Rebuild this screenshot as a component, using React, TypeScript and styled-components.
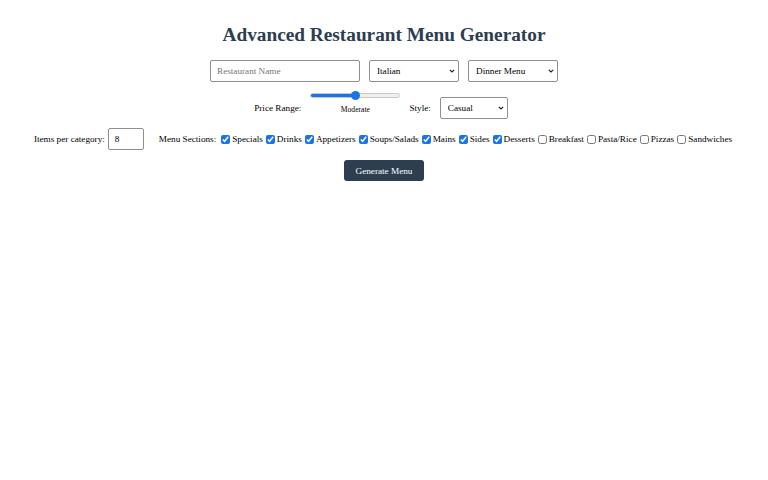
import { useState, type ReactNode } from 'react'
import styled, { createGlobalStyle } from 'styled-components'

const GlobalStyle = createGlobalStyle`
  body {
    margin: 0;
    background: #fff;
    font-family: 'Liberation Serif', 'Times New Roman', serif;
    font-size: 9.2px;
    color: #000;
  }
`

const Page = styled.div`
  display: flex;
  flex-direction: column;
  align-items: center;
  padding-top: 24px;
`

const Title = styled.h1`
  margin: 0 0 14px;
  font-size: 19.3px;
  font-weight: bold;
  color: #2c3e50;
`

const Row = styled.div<{ $gap?: number; $mt?: number; $shift?: number }>`
  display: flex;
  align-items: center;
  justify-content: center;
  gap: ${(p) => p.$gap ?? 9}px;
  margin-top: ${(p) => p.$mt ?? 0}px;
  margin-right: ${(p) => p.$shift ?? 0}px;
`

const TextInput = styled.input<{ $w: number }>`
  box-sizing: border-box;
  width: ${(p) => p.$w}px;
  height: 22px;
  padding: 0 6px;
  font-family: inherit;
  font-size: 9.2px;
  border: 1px solid #8f8f8f;
  border-radius: 2px;
  &::placeholder {
    color: #777;
  }
`

const SelectWrap = styled.div`
  position: relative;
  display: inline-flex;
  svg {
    position: absolute;
    right: 4px;
    top: 50%;
    margin-top: -2px;
    pointer-events: none;
  }
`

const SelectBox = styled.select<{ $w: number }>`
  appearance: none;
  box-sizing: border-box;
  width: ${(p) => p.$w}px;
  height: 22px;
  padding: 0 14px 0 7px;
  font-family: inherit;
  font-size: 9.2px;
  color: #000;
  border: 1px solid #8f8f8f;
  border-radius: 2px;
  background: #fff;
`

function Select({ w, value, children }: { w: number; value: string; children: ReactNode }) {
  return (
    <SelectWrap>
      <SelectBox $w={w} defaultValue={value}>
        {children}
      </SelectBox>
      <svg width="6" height="4" viewBox="0 0 6 4">
        <path d="M0.8 0.8 L3 3 L5.2 0.8" fill="none" stroke="#222" strokeWidth="1.2" />
      </svg>
    </SelectWrap>
  )
}

const Label = styled.label`
  font-size: 9.2px;
`

const SliderGroup = styled.div`
  display: flex;
  flex-direction: column;
  align-items: center;
  width: 90px;
  padding-bottom: 10px;
`

const Slider = styled.input<{ $pct: number }>`
  appearance: none;
  width: 90px;
  height: 5px;
  margin: 2px 0 7px;
  border-radius: 3px;
  border: 1px solid #c8c8c8;
  box-sizing: border-box;
  background: linear-gradient(
    to right,
    #1a73e8 ${(p) => p.$pct}%,
    #efefef ${(p) => p.$pct}%
  );
  &::-webkit-slider-thumb {
    appearance: none;
    width: 9px;
    height: 9px;
    border-radius: 50%;
    background: #1a73e8;
    border: none;
  }
`

const SliderValue = styled.span`
  font-size: 7.6px;
`

const Field = styled.div`
  display: flex;
  align-items: center;
  gap: 3px;
`

const Sections = styled.div`
  display: flex;
  align-items: center;
  margin-left: 15px;
`

const SectionsLabel = styled.span`
  margin-right: 4px;
`

const Check = styled.label`
  display: inline-flex;
  align-items: center;
  margin-right: 2px;
  input {
    width: 9px;
    height: 9px;
    margin: 0 2px 0 1px;
    accent-color: #1a73e8;
  }
`

const Button = styled.button`
  margin-top: 10px;
  height: 21px;
  padding: 0 12px;
  font-family: inherit;
  font-size: 9.2px;
  color: #fff;
  background: #2c3e50;
  border: none;
  border-radius: 3px;
`

const sections: [string, boolean][] = [
  ['Specials', true],
  ['Drinks', true],
  ['Appetizers', true],
  ['Soups/Salads', true],
  ['Mains', true],
  ['Sides', true],
  ['Desserts', true],
  ['Breakfast', false],
  ['Pasta/Rice', false],
  ['Pizzas', false],
  ['Sandwiches', false],
]

export default function App() {
  const [price, setPrice] = useState(2)
  const [count, setCount] = useState('8')

  return (
    <Page>
      <GlobalStyle />
      <Title>Advanced Restaurant Menu Generator</Title>

      <Row>
        <TextInput $w={150} placeholder="Restaurant Name" />
        <Select w={90} value="Italian">
          <option>Italian</option>
          <option>French</option>
          <option>Mexican</option>
          <option>Japanese</option>
        </Select>
        <Select w={90} value="Dinner Menu">
          <option>Breakfast Menu</option>
          <option>Lunch Menu</option>
          <option>Dinner Menu</option>
        </Select>
      </Row>

      <Row $mt={9} $shift={6}>
        <Label>Price Range:</Label>
        <SliderGroup>
          <Slider
            type="range"
            min={0}
            max={4}
            value={price}
            $pct={(price / 4) * 100}
            onChange={(e) => setPrice(Number(e.target.value))}
          />
          <SliderValue>Moderate</SliderValue>
        </SliderGroup>
        <Label>Style:</Label>
        <Select w={68} value="Casual">
          <option>Casual</option>
          <option>Fine Dining</option>
          <option>Bistro</option>
        </Select>
      </Row>

      <Row $mt={4} $gap={0}>
        <Field>
          <Label>Items per category:</Label>
          <TextInput $w={36} value={count} onChange={(e) => setCount(e.target.value)} />
        </Field>
        <Sections>
          <SectionsLabel>Menu Sections:</SectionsLabel>
          {sections.map(([name, on]) => (
            <Check key={name}>
              <input type="checkbox" defaultChecked={on} />
              {name}
            </Check>
          ))}
        </Sections>
      </Row>

      <Button>Generate Menu</Button>
    </Page>
  )
}
